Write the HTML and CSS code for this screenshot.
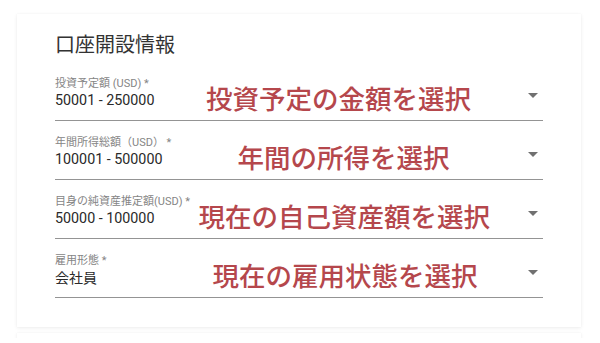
FILE: index.html
```html
<!DOCTYPE html>
<html lang="ja">
<head>
<meta charset="utf-8">
<link rel="stylesheet" href="styles.css">
</head>
<body>
<div class="page">
  <section class="card">
    <h2 class="title">口座開設情報</h2>
    <div class="fields">
      <div class="field">
        <div class="label">投資予定額 (USD) *</div>
        <div class="value">50001 - 250000</div>
        <svg class="arrow" width="10" height="5" viewBox="0 0 10 5"><path d="M0 0h10L5 5z"/></svg>
        <div class="note note-a">投資予定の金額を選択</div>
      </div>
      <div class="field">
        <div class="label">年間所得総額（USD） *</div>
        <div class="value">100001 - 500000</div>
        <svg class="arrow" width="10" height="5" viewBox="0 0 10 5"><path d="M0 0h10L5 5z"/></svg>
        <div class="note note-b">年間の所得を選択</div>
      </div>
      <div class="field">
        <div class="label">目身の純資産推定額(USD) *</div>
        <div class="value">50000 - 100000</div>
        <svg class="arrow" width="10" height="5" viewBox="0 0 10 5"><path d="M0 0h10L5 5z"/></svg>
        <div class="note note-c">現在の自己資産額を選択</div>
      </div>
      <div class="field">
        <div class="label">雇用形態 *</div>
        <div class="value value-jp">会社員</div>
        <svg class="arrow" width="10" height="5" viewBox="0 0 10 5"><path d="M0 0h10L5 5z"/></svg>
        <div class="note note-d">現在の雇用状態を選択</div>
      </div>
    </div>
  </section>
  <section class="card card-next"></section>
</div>
</body>
</html>
```
FILE: styles.css
```css
html, body {
  margin: 0;
  padding: 0;
  background: #ffffff;
  overflow: hidden;
}
body {
  font-family: Roboto, "Noto Sans CJK JP", sans-serif;
}
.page {
  padding: 14px 19px 0 17px;
  display: flex;
  flex-direction: column;
  gap: 6px;
}
.card {
  background: #fff;
  box-shadow: 0 1px 4px rgba(0, 0, 0, 0.07), 0 0 1px rgba(0, 0, 0, 0.06);
  padding: 18px 38px 29px 38px;
}
.card-next {
  height: 5px;
  padding: 0;
}
.title {
  margin: 0;
  font-family: "Noto Sans CJK JP", sans-serif;
  font-weight: 400;
  font-size: 20px;
  line-height: 24px;
  color: #333;
}
.fields {
  margin-top: 21px;
  display: flex;
  flex-direction: column;
  gap: 15px;
}
.field {
  position: relative;
  border-bottom: 1px solid #949494;
  padding-bottom: 10px;
}
.label {
  font-family: Roboto, "Noto Sans CJK JP", sans-serif;
  font-size: 11px;
  line-height: 13px;
  color: #858585;
  white-space: nowrap;
}
.value {
  font-size: 14.3px;
  line-height: 20px;
  color: #2a2a2a;
}
.value-jp {
  font-size: 14px;
  padding-top: 2px;
  line-height: 18px;
}
.arrow {
  position: absolute;
  right: 5px;
  top: 16px;
  fill: #707070;
}
.note {
  position: absolute;
  top: 8px;
  font-family: "Noto Sans CJK JP", sans-serif;
  font-weight: 500;
  font-size: 26.5px;
  line-height: 26.5px;
  color: #b5474c;
  white-space: nowrap;
}
.note-a { left: 151px; }
.note-b { left: 182.5px; }
.note-c { left: 143.5px; }
.note-d { left: 157.5px; }
```
